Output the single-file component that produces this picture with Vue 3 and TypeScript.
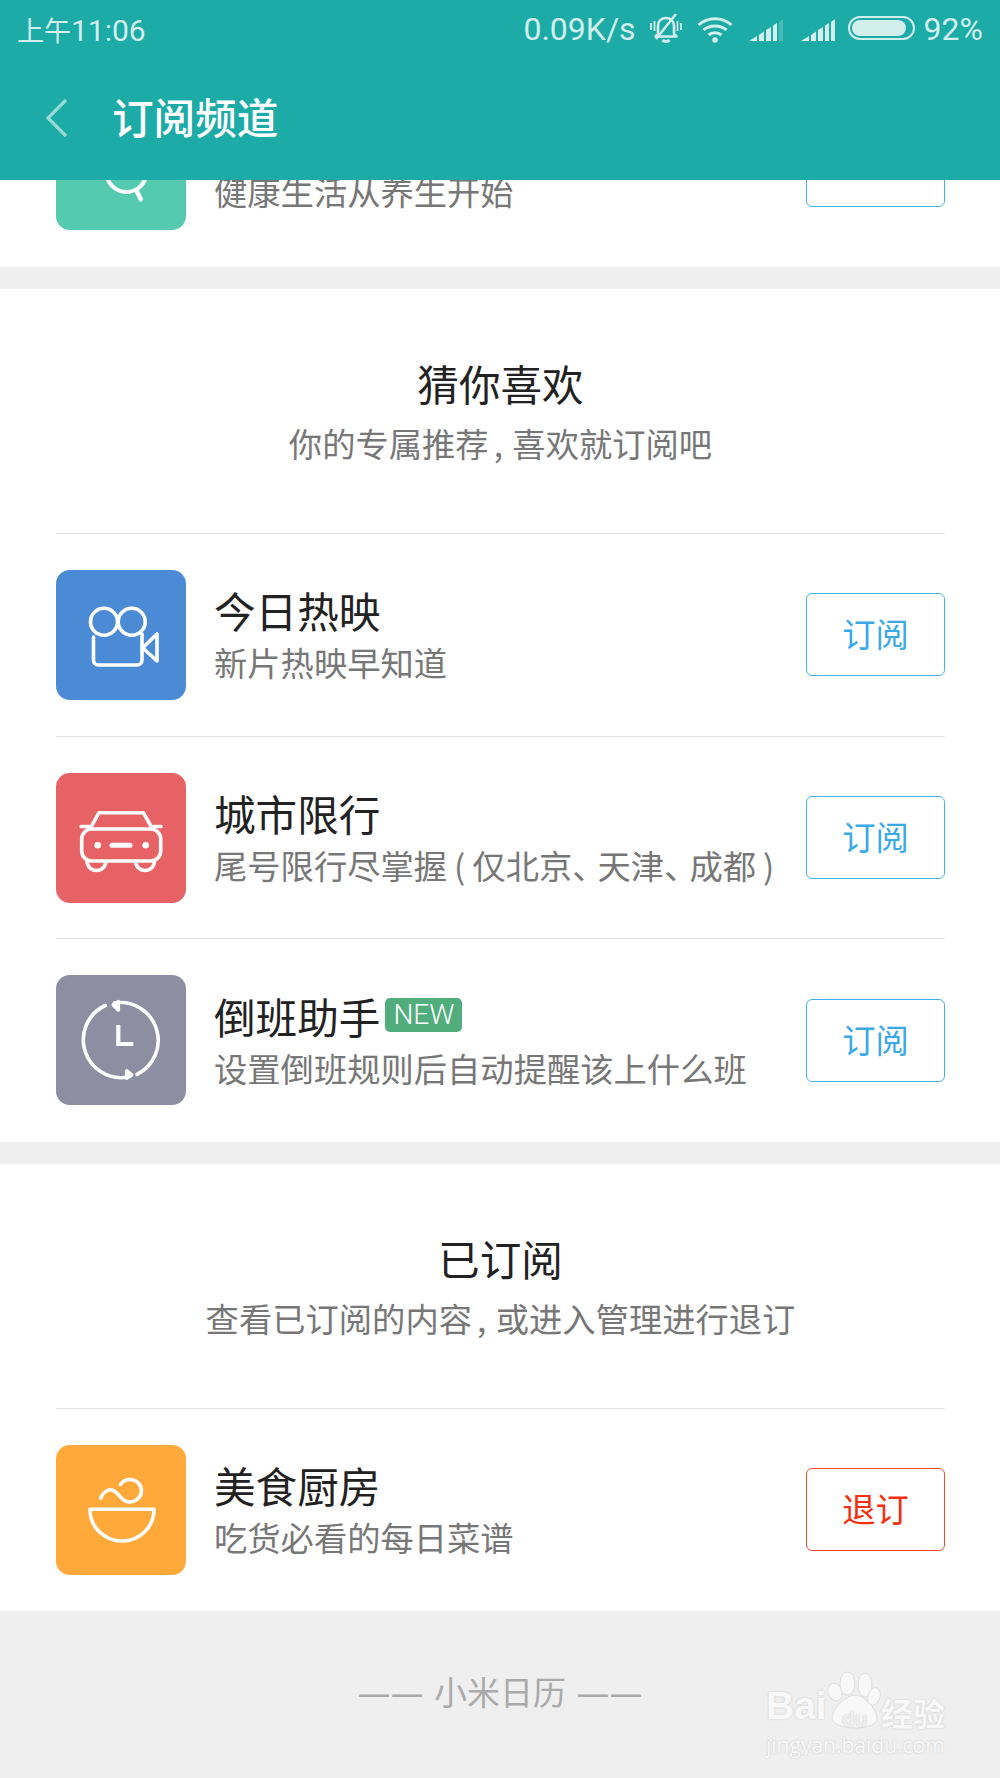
<template>
  <div class="page">
    <header class="header">
      <div class="status">
        <span class="time"><span class="time-cn">上午</span>11:06</span>
        <div class="status-right">
          <span class="speed">0.09K/s</span>
          <svg class="ic-bell" width="32" height="32" viewBox="0 0 32 32" fill="none" stroke="currentColor">
            <path d="M8 21V13c0-5 3.500-8 8-8s8 3 8 8v8l2.500 2.500H5.500z" stroke-width="2.600" stroke-linejoin="round" />
            <path d="M12.500 27c1.500 2 5.500 2 7 0" stroke-width="3" />
            <path d="M6 26L26 1" stroke-width="2.600" />
            <path d="M1 10v7M4.500 8v10M27.500 8v10M31 10v7" stroke-width="1.800" />
          </svg>
          <svg class="ic-wifi" width="36" height="30" viewBox="0 0 36 30" fill="none" stroke="currentColor" stroke-width="3">
            <path d="M1.500 11C10.500 2.500 25.500 2.500 34.500 11" />
            <path d="M6.500 16C12.500 10.500 23.500 10.500 29.500 16" />
            <path d="M11.500 21C15 18 21 18 24.500 21" />
            <circle cx="18" cy="26" r="2.800" fill="currentColor" stroke="none" />
          </svg>
          <svg class="ic-signal" width="35" height="24" viewBox="0 0 35 24">
            <path d="M0 24L8 19V24ZM10 18L15 14.500V24H10ZM17 13L22 10V24H17ZM24 8.500L28 6V24H24Z" fill="currentColor" />
            <path d="M30 5L34 2V24H30Z" fill="currentColor" opacity="0.25" />
          </svg>
          <svg class="ic-signal" width="35" height="24" viewBox="0 0 35 24">
            <path d="M0 24L8 19V24ZM10 18L15 14.500V24H10ZM17 13L22 10V24H17ZM24 8.500L28 6V24H24ZM30 5L34 2V24H30Z" fill="currentColor" />
          </svg>
          <div class="battery"><div class="battery-fill"></div></div>
          <span class="percent">92%</span>
        </div>
      </div>
      <div class="toolbar">
        <svg class="back" width="24" height="40" viewBox="0 0 24 40" fill="none">
          <path d="M21 2L3 20L21 38" stroke="#fff" stroke-opacity="0.55" stroke-width="3.200" />
        </svg>
        <h1 class="page-title">订阅频道</h1>
      </div>
    </header>

    <section class="card clipped">
      <div class="row-clipped">
        <div class="icon icon-green">
          <svg width="130" height="130" viewBox="0 0 130 130" fill="none" stroke="#fff" stroke-width="4">
            <circle cx="70.500" cy="72" r="20" />
            <path d="M80.700 90.700L84.700 99.300" stroke-width="4.500" stroke-linecap="round" />
          </svg>
        </div>
        <div class="text">
          <div class="sub">健康生活从养生开始</div>
        </div>
        <div class="btn btn-cut"></div>
      </div>
    </section>

    <section v-for="group in groups" :key="group.title" class="card">
      <div class="group-head">
        <h2 class="group-title">{{ group.title }}</h2>
        <p class="group-sub">
          <template v-for="(part, i) in group.sub.split(',')" :key="i"><span v-if="i" class="comma">,</span>{{ part }}</template>
        </p>
      </div>
      <div v-for="item in group.items" :key="item.name" class="row">
        <div class="icon" :class="`icon-${item.icon}`">
          <svg width="130" height="130" viewBox="0 0 130 130" fill="none" stroke="#fff" stroke-width="3.600" stroke-linecap="round" stroke-linejoin="round">
            <template v-if="item.icon === 'film'">
              <circle cx="48" cy="51.700" r="13.500" />
              <circle cx="75.700" cy="51.700" r="13.500" />
              <path d="M37.500 67V90a5 5 0 0 0 5 5H81a5 5 0 0 0 5-5V64" />
              <path d="M101 64V91L86.700 77.700Z" />
            </template>
            <template v-else-if="item.icon === 'car'">
              <path d="M34.500 55L43 39.700H87.300L96 55" />
              <rect x="25.700" y="56" width="79" height="32" rx="10" />
              <path d="M25 53.500H33M97.500 53.500H105" />
              <circle cx="41.700" cy="72.300" r="3.300" fill="#fff" stroke="none" />
              <circle cx="89.700" cy="72.300" r="3.300" fill="#fff" stroke="none" />
              <path d="M56 72.300H74" stroke-width="5" />
              <path d="M31 88a9.500 9.500 0 0 0 19 0M79.500 88a9.500 9.500 0 0 0 19 0" />
            </template>
            <template v-else-if="item.icon === 'clock'">
              <path d="M58.500 28A37.800 37.800 0 0 1 81 99.300" />
              <path d="M72 102A37.800 37.800 0 0 1 49.300 30.500" />
              <path d="M57.300 30L62.300 26.700V35Z" fill="#fff" />
              <path d="M75.700 100L70.700 96V103.300Z" fill="#fff" />
              <path d="M62.300 50V69H77.300" stroke-width="4.200" stroke-linecap="butt" stroke-linejoin="miter" />
            </template>
            <template v-else>
              <path d="M34 64.300H98C98 82 84 96 66 96S34 82 34 64.300Z" />
              <path d="M44.700 53C47 47 52 44 56 45C62 46 65 57 73 57C80 57 85.500 52 85.500 46C85.500 39 80 34.500 74 34.500C70 34.500 66.500 36.500 64.500 39.500" />
            </template>
          </svg>
        </div>
        <div class="text">
          <div class="name">
            {{ item.name }}<span v-if="item.isNew" class="badge">NEW</span>
          </div>
          <div class="sub"><span v-for="(t, i) in tokens(item.desc)" :key="i" :class="t.cls">{{ t.text }}</span></div>
        </div>
        <button class="btn" :class="{ 'btn-red': item.subscribed }">
          {{ item.subscribed ? '退订' : '订阅' }}
        </button>
      </div>
    </section>

    <footer class="footer">—— 小米日历 ——</footer>

    <div class="watermark">
      <div class="wm-logo">
        <span class="wm-latin">Bai</span>
        <svg class="wm-paw" width="56" height="60" viewBox="0 0 56 60">
          <g fill="#f8f8f8" stroke="#dedede" stroke-width="1">
            <ellipse cx="9" cy="22" rx="7" ry="9" transform="rotate(-20 9 22)" />
            <ellipse cx="21.500" cy="13.500" rx="7.500" ry="11.500" />
            <ellipse cx="39" cy="15" rx="7" ry="12" />
            <ellipse cx="48" cy="26.500" rx="6" ry="9" transform="rotate(20 48 26.500)" />
            <path d="M29 25C38 25 50 38 51 47C52 54 42 58 29 58C16 58 6 54 6 47C7 38 20 25 29 25Z" />
          </g>
        </svg>
        <span class="wm-du">du</span>
        <span class="wm-cn">经验</span>
      </div>
      <div class="wm-url">jingyan.baidu.com</div>
    </div>
  </div>
</template>

<script setup lang="ts">
  interface Item {
    name: string
    desc: string
    icon: 'film' | 'car' | 'clock' | 'bowl'
    isNew?: boolean
    subscribed?: boolean
  }

  const groups: { title: string; sub: string; items: Item[] }[] = [
    {
      title: '猜你喜欢',
      sub: '你的专属推荐, 喜欢就订阅吧',
      items: [
        { name: '今日热映', desc: '新片热映早知道', icon: 'film' },
        { name: '城市限行', desc: '尾号限行尽掌握(仅北京、天津、成都)', icon: 'car' },
        { name: '倒班助手', desc: '设置倒班规则后自动提醒该上什么班', icon: 'clock', isNew: true },
      ],
    },
    {
      title: '已订阅',
      sub: '查看已订阅的内容, 或进入管理进行退订',
      items: [{ name: '美食厨房', desc: '吃货必看的每日菜谱', icon: 'bowl', subscribed: true }],
    },
  ]

  // the punctuation in the descriptions is set tighter or looser than the font's default
  const tokens = (s: string) =>
    s
      .split(/([、()])/)
      .filter(Boolean)
      .map((text) => ({
        text,
        cls: text === '、' ? 'dun' : text === '(' || text === ')' ? 'paren' : '',
      }))
</script>

<style>
  html,
  body {
    margin: 0;
    background: #efefef;
  }
</style>

<style scoped>
  .page {
    position: relative;
    height: 1778px;
    overflow: hidden;
    background: #efefef;
    font-family: 'Noto Sans CJK SC', 'Noto Sans', sans-serif;
  }

  .header {
    height: 180px;
    background: #1caba7;
    color: #fff;
  }
  .status {
    height: 58px;
    padding: 0 17px;
    display: flex;
    align-items: center;
    justify-content: space-between;
    color: #d2efed;
    font-family: Roboto, 'Noto Sans CJK SC', sans-serif;
    font-size: 32px;
  }
  .time {
    font-size: 30px;
  }
  .time-cn {
    font-size: 27px;
  }
  .status-right {
    display: flex;
    align-items: center;
  }
  .ic-bell {
    margin-left: 14px;
  }
  .ic-wifi {
    margin-left: 15px;
  }
  .ic-signal {
    margin-left: 17px;
  }
  .ic-wifi + .ic-signal {
    margin-left: 16px;
  }
  .battery {
    margin-left: 12px;
    margin-top: -2px;
    width: 67px;
    height: 24px;
    box-sizing: border-box;
    border: 2px solid #d2efed;
    border-radius: 12px;
    padding: 2px;
  }
  .battery-fill {
    width: 92%;
    height: 100%;
    background: #d2efed;
    border-radius: 8px;
  }
  .percent {
    margin-left: 9px;
  }
  .toolbar {
    height: 122px;
    display: flex;
    align-items: center;
    padding-left: 45px;
  }
  .back {
    margin-top: -3px;
  }
  .page-title {
    margin: 0 0 4px 43px;
    font-size: 41.600px;
    font-weight: 500;
    line-height: 1;
  }

  .card {
    background: #fff;
    padding: 0 55px 0 56px;
    margin-bottom: 22px;
  }
  .clipped + .card {
    padding-bottom: 1px;
  }
  .clipped {
    height: 87px;
    overflow: hidden;
  }
  .row-clipped {
    height: 50px;
    display: flex;
    align-items: flex-end;
  }
  .row-clipped .icon {
    margin-top: -80px;
  }
  .row-clipped .text {
    align-self: flex-start;
    margin-top: -15px;
  }
  .btn-cut {
    align-self: flex-start;
    box-sizing: border-box;
    margin-top: -56px;
  }

  .group-head {
    height: 244px;
    box-sizing: border-box;
    padding-top: 64px;
    text-align: center;
  }
  .group-title {
    margin: 0;
    font-size: 41.600px;
    font-weight: 400;
    line-height: 60px;
    color: #222;
  }
  .group-sub {
    margin: 2px 0 0;
    font-size: 33.300px;
    line-height: 56px;
    color: #777;
    word-spacing: 2px;
  }
  .comma {
    padding-left: 5px;
  }

  .row {
    height: 202.700px;
    box-sizing: border-box;
    border-top: 1px solid #e2e2e2;
    display: flex;
    align-items: center;
  }
  .icon {
    flex: none;
    width: 130px;
    height: 130px;
    border-radius: 14px;
  }
  .icon svg {
    display: block;
  }
  .icon-green {
    background: #54cbae;
  }
  .icon-film {
    background: #4b8bd6;
  }
  .icon-car {
    background: #e76264;
  }
  .icon-clock {
    background: #8e8ea3;
  }
  .icon-bowl {
    background: #ffa93a;
  }
  .text {
    flex: 1;
    min-width: 0;
    margin: 3px 0 0 28px;
  }
  .name {
    display: flex;
    align-items: center;
    font-size: 41.600px;
    line-height: 51px;
    color: #222;
  }
  .sub {
    font-size: 33.300px;
    line-height: 51px;
    color: #777;
    white-space: nowrap;
  }
  .dun {
    letter-spacing: -8px;
  }
  .paren {
    margin: 0 7px;
  }
  .badge {
    margin: -2px 0 0 5px;
    padding: 0 8px;
    height: 34px;
    line-height: 34px;
    border-radius: 5px;
    background: #52ad7d;
    color: #fff;
    font-family: Roboto, sans-serif;
    font-size: 28px;
    font-weight: 300;
  }
  .btn {
    flex: none;
    width: 139px;
    height: 83px;
    padding: 0 0 4px;
    background: #fff;
    border: 1px solid #45b2ef;
    border-radius: 6px;
    color: #3aa9e8;
    font-family: inherit;
    font-size: 33.300px;
  }
  .btn-red {
    border-color: #f24a2c;
    color: #f0300f;
  }

  .footer {
    padding-top: 36px;
    text-align: center;
    font-family: 'DejaVu Sans', 'Noto Sans CJK SC', sans-serif;
    font-size: 33px;
    line-height: 50px;
    color: #aaa;
  }

  .watermark {
    position: absolute;
    left: 766px;
    top: 1668px;
    width: 182px;
    color: #f8f8f8;
    text-shadow: 0 0 2px #c4c4c4;
  }
  .wm-logo {
    display: flex;
    align-items: flex-end;
    height: 60px;
    position: relative;
  }
  .wm-latin {
    font-family: 'Liberation Sans', sans-serif;
    font-weight: 700;
    font-size: 39px;
    line-height: 44px;
  }
  .wm-paw {
    position: absolute;
    left: 60px;
    top: 2px;
  }
  .wm-du {
    position: absolute;
    left: 76px;
    top: 40px;
    font-family: 'Liberation Sans', sans-serif;
    font-weight: 700;
    font-size: 21px;
    line-height: 22px;
    color: #efefef;
  }
  .wm-cn {
    position: absolute;
    left: 115px;
    top: 26px;
    font-size: 32px;
    line-height: 36px;
    font-weight: 700;
  }
  .wm-url {
    margin-top: 4px;
    font-family: 'Open Sans', sans-serif;
    font-size: 21px;
    line-height: 26px;
    white-space: nowrap;
  }
</style>
